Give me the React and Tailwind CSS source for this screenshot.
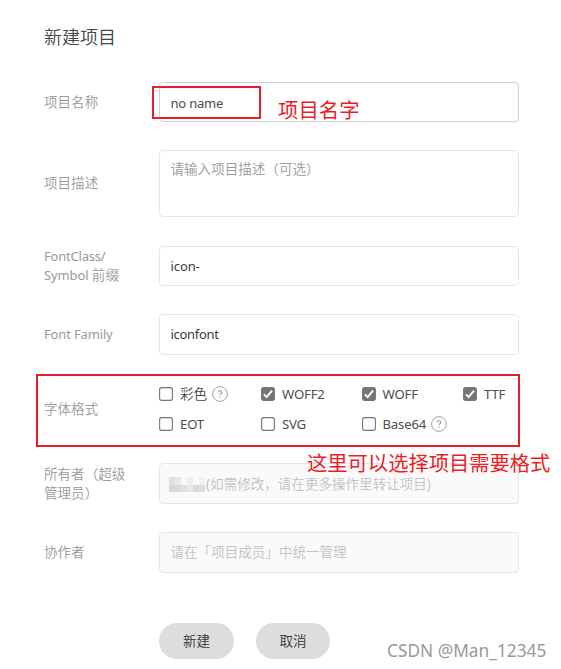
import React from 'react';

const FIELD = 'box-border flex w-[360px] shrink-0 items-center rounded-[4px] border px-[10.5px] ';

function Row({ label, className, children }) {
  return (
    <div className={'flex items-center ' + className}>
      <div className="w-[115px] shrink-0 leading-[19px] text-[#999]">{label}</div>
      {children}
    </div>
  );
}

function Help() {
  return (
    <svg className="ml-[5px] h-4 w-4 shrink-0" viewBox="0 0 16 16" fill="none" stroke="#999" strokeWidth="0.9">
      <circle cx="8" cy="8" r="7.4" />
      <path d="M6.2 6.6c0-1.1.7-1.8 1.8-1.8s1.8.7 1.8 1.6c0 1.3-1.8 1.4-1.8 2.7" strokeWidth="1.1" />
      <path d="M8 10.3v1.1" strokeWidth="1.1" />
    </svg>
  );
}

function Check({ label, checked, help, latin = true }) {
  return (
    <div className="flex h-[30px] items-center">
      <svg className="h-[14px] w-[14px] shrink-0" viewBox="0 0 14 14" fill="none">
        <rect
          x="0.6"
          y="0.6"
          width="12.8"
          height="12.8"
          rx="2.2"
          fill={checked ? '#767676' : '#fff'}
          stroke="#767676"
          strokeWidth="1.1"
        />
        {checked && <path d="M3 7.4l2.6 2.7L11 3.6" stroke="#fff" strokeWidth="2" />}
      </svg>
      <span
        className={
          'ml-[7px] whitespace-nowrap ' +
          (latin ? 'text-[13.2px] font-normal tracking-[-0.2px] text-[#4d4d4d]' : 'text-[#444]')
        }
      >
        {label}
      </span>
      {help && <Help />}
    </div>
  );
}

const MOSAIC = [
  'bg-[#e0e0e0]', 'bg-[#e8e8e8]', 'bg-[#fafafa]', 'bg-[#eeeeee]', 'bg-[#f8f8f8]', 'bg-[#f0f0f0]',
  'bg-[#d9d9d9]', 'bg-[#dadada]', 'bg-[#e0e0e0]', 'bg-[#e8e8e8]', 'bg-[#d9d9d9]', 'bg-[#dddddd]',
];

export default function App() {
  return (
    <div className="relative h-[669px] w-[561px] overflow-hidden bg-white pl-[44px] font-['Noto_Sans','Noto_Sans_CJK_SC',sans-serif] text-[13.55px] leading-[19px] font-[350]">
      <h1 className="pt-[24px] text-[18px] leading-[26px] font-[350] text-[#444]">新建项目</h1>

      <Row label="项目名称" className="mt-[32px] h-[40px]">
        <div className={FIELD + 'h-[40px] border-[#d0d0d0] pt-[2px] text-[13px] font-normal tracking-[-0.2px] text-[#4d4d4d]'}>
          no name
        </div>
      </Row>
      <Row label="项目描述" className="mt-[28px] h-[67px]">
        <div className={FIELD + 'h-[67px] border-[#e6e6e6] pt-[9px] text-[#999]'}>
          <span className="self-start">请输入项目描述（可选）</span>
        </div>
      </Row>
      <Row
        label={
          <>
            <span className="text-[13px] font-normal tracking-[-0.2px]">FontClass/</span>
            <br />
            <span className="text-[13px] font-normal tracking-[-0.1px]">Symbol </span>前缀
          </>
        }
        className="mt-[29px] h-[40px]"
      >
        <div className={FIELD + 'h-[40px] border-[#e6e6e6] text-[13px] font-normal tracking-[-0.1px] text-[#3a3a3a]'}>
          icon-
        </div>
      </Row>
      <Row
        label={<span className="text-[13px] font-normal tracking-[-0.15px]">Font Family</span>}
        className="mt-[28px] h-[41px]"
      >
        <div className={FIELD + 'h-[41px] border-[#e6e6e6] text-[13px] font-normal tracking-[-0.3px] text-[#3a3a3a]'}>
          iconfont
        </div>
      </Row>
      <Row label="字体格式" className="mt-[24px] h-[60px]">
        <div className="grid shrink-0 grid-cols-[102px_100.5px_101.5px_60px]">
          <Check label="彩色" help latin={false} />
          <Check label="WOFF2" checked />
          <Check label="WOFF" checked />
          <Check label="TTF" checked />
          <Check label="EOT" />
          <Check label="SVG" />
          <Check label="Base64" help />
        </div>
      </Row>
      <Row label={<>所有者（超级<br />管理员）</>} className="mt-[24px] h-[41px]">
        <div className={FIELD + 'h-[41px] border-[#e6e6e6] bg-[#fafafa] pl-[9px] pt-[2px] text-[#c2c2c2]'}>
          <div className="mr-[1px] grid h-[15px] shrink-0 grid-cols-6">
            {MOSAIC.map((c, i) => (
              <i key={i} className={'w-[6px] ' + c} />
            ))}
          </div>
          <span className="whitespace-nowrap">
            <span className="font-normal">(</span>如需修改，请在更多操作里转让项目<span className="font-normal">)</span>
          </span>
        </div>
      </Row>
      <Row label="协作者" className="mt-[28px] h-[41px]">
        <div className={FIELD + 'h-[41px] border-[#e6e6e6] bg-[#fafafa] text-[#c2c2c2]'}>
          请在「项目成员」中统一管理
        </div>
      </Row>

      <div className="mt-[50px] flex gap-[22px] pl-[115px] text-[#333]">
        <div className="flex h-[36px] w-[75px] items-center justify-center rounded-full bg-[#ddd]">新建</div>
        <div className="flex h-[36px] w-[74px] items-center justify-center rounded-full bg-[#ddd]">取消</div>
      </div>

      <div className="absolute left-[152px] top-[86px] h-[33px] w-[109px] border-2 border-[#ec1c24]" />
      <div className="absolute left-[278px] top-[96px] whitespace-nowrap text-[20.4px] leading-[28px] font-normal text-[#ec1c24]">
        项目名字
      </div>
      <div className="absolute left-[36px] top-[374px] h-[73px] w-[484px] border-2 border-[#ec1c24]" />
      <div className="absolute left-[307px] top-[449px] whitespace-nowrap text-[20.3px] leading-[28px] font-normal text-[#ec1c24]">
        这里可以选择项目需要格式
      </div>
      <div className="absolute left-[387px] top-[639px] whitespace-nowrap text-[17.3px] leading-[24px] font-normal text-[#999]">
        CSDN @Man_12345
      </div>
    </div>
  );
}
